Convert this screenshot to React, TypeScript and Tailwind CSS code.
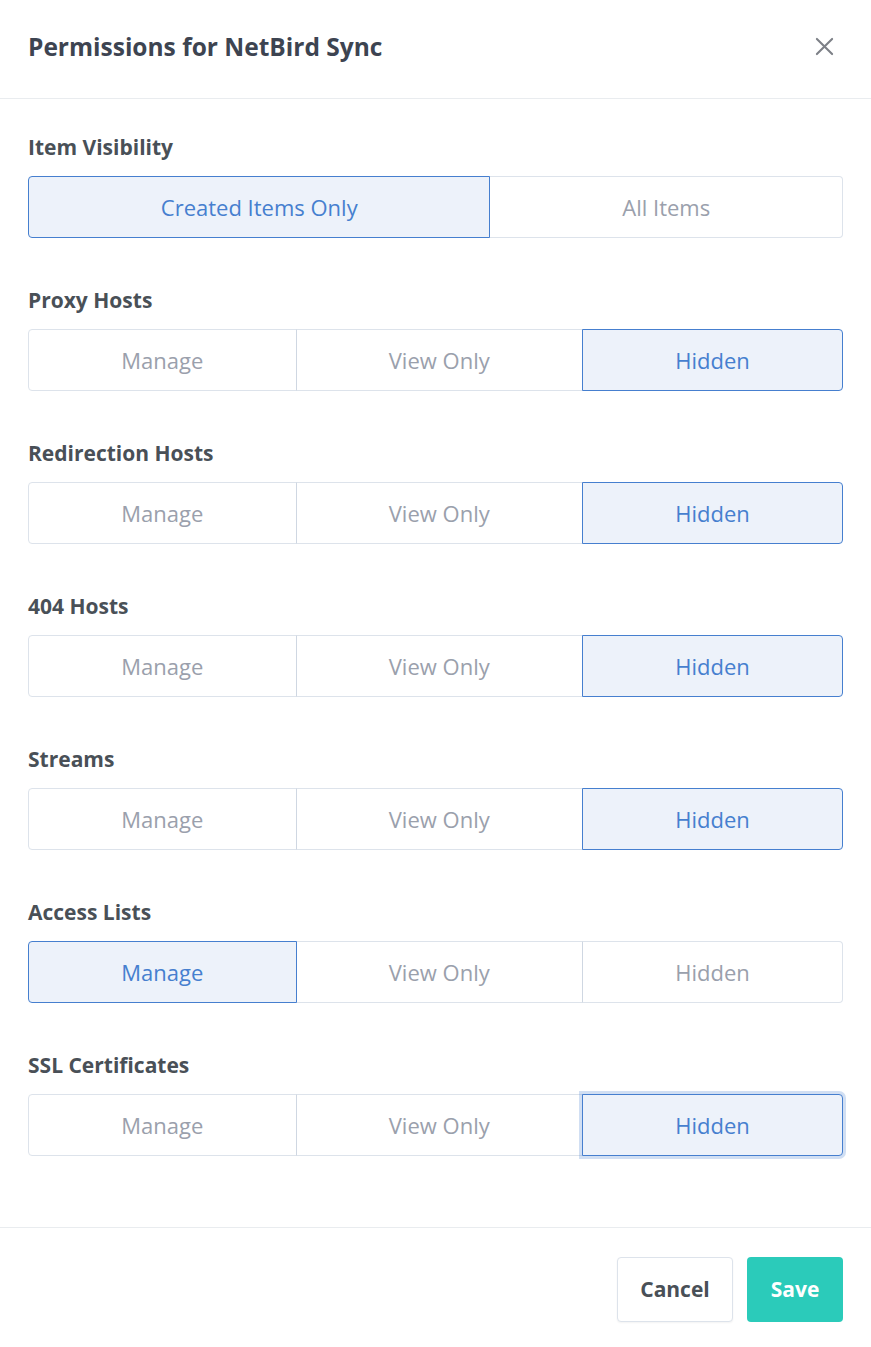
import { useState } from 'react'

type Opt = { value: string; label: string }

const visibilityOpts: Opt[] = [
  { value: 'user', label: 'Created Items Only' },
  { value: 'all', label: 'All Items' },
]

const permOpts: Opt[] = [
  { value: 'manage', label: 'Manage' },
  { value: 'view', label: 'View Only' },
  { value: 'hidden', label: 'Hidden' },
]

const SelectGroup = ({
  options,
  value,
  focused,
  onChange,
}: {
  options: Opt[]
  value: string
  focused?: boolean
  onChange: (v: string) => void
}) => {
  return (
    <div className="flex w-full">
      {options.map((o, i) => {
        const active = o.value === value
        const first = i === 0
        const last = i === options.length - 1
        return (
          <button
            key={o.value}
            type="button"
            onClick={() => onChange(o.value)}
            className={[
              'relative flex-auto h-[62px] px-4 border text-[22px] leading-none',
              first ? 'rounded-l-[4px]' : '-ml-px',
              last ? 'rounded-r-[4px]' : '',
              active
                ? 'z-10 border-[#467fcf] bg-[#edf2fa] text-[#467fcf]'
                : 'border-[#dde3eb] border-l-[#cfd7e2] bg-white text-[#9aa0ac]',
              first && !active ? 'border-l-[#dde3eb]' : '',
              active && focused ? 'shadow-[0_0_0_3px_rgba(70,127,207,0.25)]' : '',
            ].join(' ')}
          >
            {o.label}
          </button>
        )
      })}
    </div>
  )
}

const Field = ({
  label,
  children,
  last,
}: {
  label: string
  children: React.ReactNode
  last?: boolean
}) => {
  return (
    <div className={last ? '' : 'mb-[47px]'}>
      <div className="mb-[14px] text-[21px] leading-[30px] font-bold text-[#495057]">
        {label}
      </div>
      {children}
    </div>
  )
}

const App = () => {
  const [visibility, setVisibility] = useState('user')
  const [perms, setPerms] = useState<Record<string, string>>({
    proxy: 'hidden',
    redirection: 'hidden',
    dead: 'hidden',
    streams: 'hidden',
    access: 'manage',
    certs: 'hidden',
  })

  const rows = [
    { key: 'proxy', label: 'Proxy Hosts' },
    { key: 'redirection', label: 'Redirection Hosts' },
    { key: 'dead', label: '404 Hosts' },
    { key: 'streams', label: 'Streams' },
    { key: 'access', label: 'Access Lists' },
    { key: 'certs', label: 'SSL Certificates' },
  ]

  return (
    <div
      className="min-h-screen w-full bg-white text-[#495057]"
      style={{ fontFamily: '"Open Sans", Lato, sans-serif' }}
    >
      {/* header */}
      <div className="flex h-[99px] items-center justify-between border-b border-[#e9ecef] px-[28px]">
        <h2 className="-mt-[4px] text-[24.5px] font-bold text-[#3d4451]">
          Permissions for NetBird Sync
        </h2>
        <button type="button" aria-label="Close" className="mr-[9px] -mt-[6px] text-[#7d8087]">
          <svg width="19" height="19" viewBox="0 0 20 20" fill="none" stroke="currentColor" strokeWidth="2.2" strokeLinecap="round">
            <path d="M2 2l16 16M18 2L2 18" />
          </svg>
        </button>
      </div>

      {/* body */}
      <div className="px-[28px] pt-[33px] pb-[71px]">
        <Field label="Item Visibility">
          <SelectGroup options={visibilityOpts} value={visibility} onChange={setVisibility} />
        </Field>
        {rows.map((r, i) => (
          <Field key={r.key} label={r.label} last={i === rows.length - 1}>
            <SelectGroup
              options={permOpts}
              value={perms[r.key]}
              focused={r.key === 'certs'}
              onChange={(v) => setPerms({ ...perms, [r.key]: v })}
            />
          </Field>
        ))}
      </div>

      {/* footer */}
      <div className="flex justify-end gap-[14px] border-t border-[#e9ecef] px-[28px] pt-[29px] pb-[25px]">
        <button
          type="button"
          className="h-[65px] w-[116px] rounded-[4px] border border-[#dde3eb] bg-white text-[21px] font-bold text-[#495057] shadow-[0_1px_2px_rgba(0,0,0,0.05)]"
        >
          Cancel
        </button>
        <button
          type="button"
          className="h-[65px] w-[96px] rounded-[4px] bg-[#2bcbba] text-[21px] font-bold text-white"
        >
          Save
        </button>
      </div>
    </div>
  )
}

export default App
